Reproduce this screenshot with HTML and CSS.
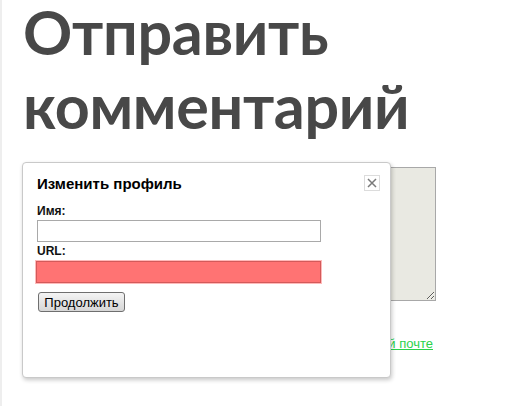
FILE: index.html
```html
<!DOCTYPE html>
<html lang="ru">
<head>
<meta charset="utf-8">
<title>Отправить комментарий</title>
<link rel="stylesheet" href="styles.css">
</head>
<body>
<div class="page">
  <h1 class="title"><span class="title-line">Отправить</span> <span class="title-line title-line-2">комментарий</span></h1>
  <div class="comment-form">
    <textarea class="comment-box"></textarea>
    <p class="subscribe"><a href="#">Подписаться на новые комментарии по электронной почте</a></p>
  </div>
</div>

<div class="dialog">
  <button class="dialog-close" aria-label="Закрыть">
    <svg width="10" height="10" viewBox="0 0 10 10"><path d="M1 1L9 9M9 1L1 9" stroke="#7a7a7a" stroke-width="1.5" fill="none"/></svg>
  </button>
  <h2 class="dialog-title">Изменить профиль</h2>
  <label class="field-label" for="name">Имя:</label>
  <input class="field" id="name" type="text">
  <label class="field-label" for="url">URL:</label>
  <input class="field field-error" id="url" type="text">
  <button class="btn">Продолжить</button>
</div>
</body>
</html>
```

FILE: styles.css
```css
html, body {
  margin: 0;
  padding: 0;
  background: #ffffff;
}

body {
  position: relative;
  height: 406px;
  overflow: hidden;
  border-left: 2px solid #eeeeee;
  box-sizing: border-box;
}

.page {
  padding-left: 21px;
  width: 470px;
}

.title {
  margin: 0;
  padding-top: 1px;
  font-family: Lato, "Open Sans", sans-serif;
  font-weight: 700;
  font-size: 61px;
  line-height: 62px;
  color: #484848;
  letter-spacing: -0.3px;
}

.title-line {
  display: block;
}

.title-line-2 {
  margin-top: 12px;
}

.comment-form {
  margin-top: 30px;
  padding-left: 1px;
}

.comment-box {
  display: block;
  box-sizing: border-box;
  width: 412px;
  height: 134px;
  margin: 0;
  border: 1px solid #a8a8a8;
  background: #e9e9e2;
  resize: both;
}

.subscribe {
  margin: 35px 0 0 0;
  width: 409px;
  text-align: right;
  white-space: nowrap;
  font-family: "Liberation Sans", Arial, sans-serif;
  font-size: 13px;
  line-height: 16px;
}

.subscribe a {
  color: #2bd24b;
}

/* overlay dialog */
.dialog {
  position: absolute;
  left: 20px;
  top: 162px;
  width: 369px;
  height: 216px;
  box-sizing: border-box;
  background: #ffffff;
  border: 1px solid #c9c9c9;
  border-radius: 4px;
  box-shadow: 1px 2px 4px rgba(0, 0, 0, 0.22);
  padding: 12px 14px;
  display: flex;
  flex-direction: column;
  align-items: flex-start;
  font-family: "Liberation Sans", Arial, sans-serif;
}

.dialog-close {
  position: absolute;
  top: 12px;
  right: 10px;
  width: 16px;
  height: 16px;
  padding: 0;
  margin: 0;
  border: 1px solid #dcdcdc;
  background: #ffffff;
  display: flex;
  align-items: center;
  justify-content: center;
}

.dialog-title {
  margin: 0;
  font-size: 15px;
  line-height: 18px;
  font-weight: bold;
  color: #000000;
}

.field-label {
  font-size: 12px;
  line-height: 14px;
  font-weight: bold;
  color: #111111;
  margin-top: 11px;
}

.field-label + .field {
  margin-top: 2px;
}

.field {
  box-sizing: border-box;
  width: 284px;
  height: 22px;
  margin: 0;
  border: 1px solid #a9a9a9;
  background: #ffffff;
  padding: 0 2px;
}

.field + .field-label {
  margin-top: 2px;
}

.field-error {
  width: 285px;
  height: 22px;
  margin-left: -1px;
  margin-top: 3px !important;
  border: 1px solid #d35a5a;
  background: #ff7373;
  box-shadow: 0 0 0 1px rgba(255, 130, 130, 0.55);
}

.btn {
  margin-top: 9px;
  margin-left: 1px;
  width: 87px;
  height: 20px;
  padding: 0;
  border: 1px solid #6f6f6f;
  border-radius: 3px;
  background: linear-gradient(#f4f4f4, #d6d6d6);
  font-family: "Liberation Sans", Arial, sans-serif;
  font-size: 13px;
  color: #000000;
}
```
